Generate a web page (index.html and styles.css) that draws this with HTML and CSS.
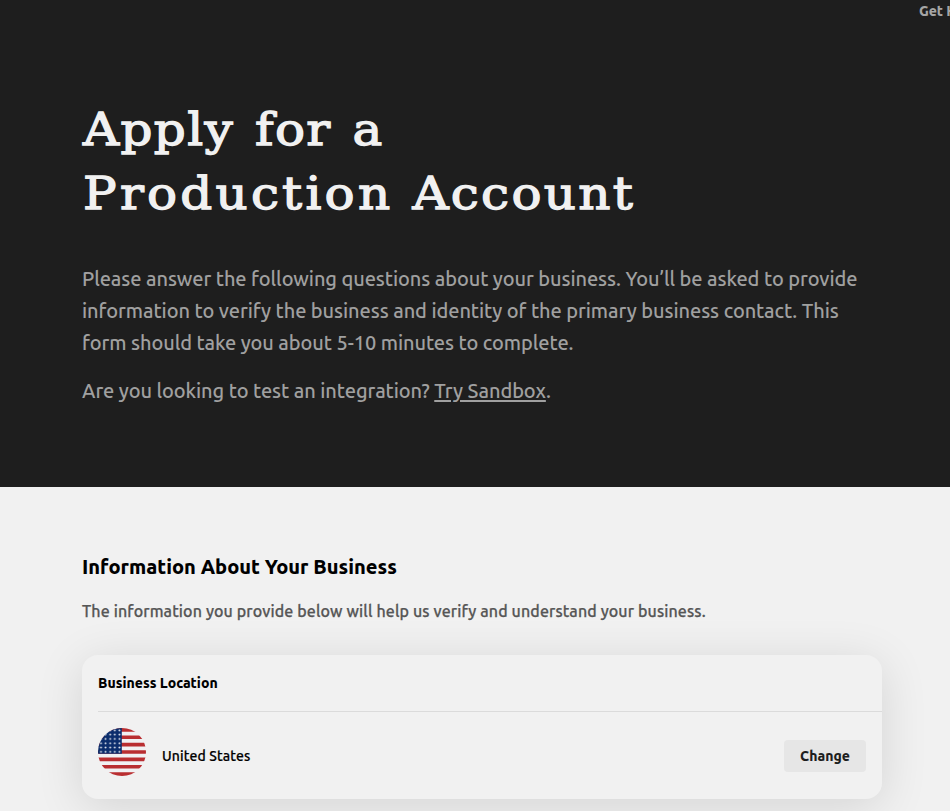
FILE: index.html
```html
<!DOCTYPE html>
<html lang="en">
<head>
<meta charset="utf-8">
<title>Apply for a Production Account</title>
<link rel="stylesheet" href="styles.css">
</head>
<body>
<header class="hero">
  <nav class="topnav"><a class="help" href="#">Get Help</a></nav>
  <div class="container">
    <h1><span class="first-line">Apply for a</span><br><span class="wide">Production </span>Account</h1>
    <p class="lead">Please answer the following questions about your business. You’ll be asked to provide<br>information to verify the business and identity of the primary business contact. This<br>form should take you about 5-10 minutes to complete.</p>
    <p class="lead">Are you looking to test an integration? <a href="#">Try Sandbox</a>.</p>
  </div>
</header>
<main class="container">
  <h2>Information About Your Business</h2>
  <p class="sub">The information you provide below will help us verify and understand your business.</p>
  <section class="card">
    <h3>Business Location</h3>
    <div class="row">
      <svg class="flag" viewBox="0 0 48 48" aria-hidden="true">
        <defs>
          <clipPath id="round"><circle cx="24" cy="24" r="24"/></clipPath>
          <pattern id="stars" x="0.7" y="0.2" width="4.6" height="4.3" patternUnits="userSpaceOnUse"><circle cx="2.3" cy="2.15" r="0.95" fill="#f1f3f8"/></pattern>
        </defs>
        <g clip-path="url(#round)">
          <path fill="#f1f1f3" d="M0 0h48v48H0z"/>
          <path stroke="#b92e31" stroke-width="3.69" d="M0 1.85h48M0 9.23h48M0 16.62h48M0 24h48M0 31.38h48M0 38.77h48M0 46.15h48"/>
          <path fill="#0b2d6c" d="M0 0h23.8v25.85H0z"/>
          <path fill="url(#stars)" d="M0 0h23.8v25.85H0z"/>
        </g>
      </svg>
      <span class="country">United States</span>
      <button class="change" type="button">Change</button>
    </div>
  </section>
</main>
</body>
</html>
```
FILE: styles.css
```css
* { box-sizing: border-box; }
html { overflow: hidden; }
body { margin: 0; height: 811px; overflow: hidden; background: #f1f1f1; font-family: Ubuntu, "Noto Sans", sans-serif; color: #000; }
h1, h2, h3, p { margin: 0; }
.container { width: 800px; margin-left: 82px; }
.hero { height: 487px; background: #1e1e1e; overflow: hidden; }
.topnav { height: 97px; padding-left: 919px; white-space: nowrap; }
.help { display: block; color: #a5a5a5; font-size: 14px; line-height: 22px; font-weight: 800; letter-spacing: -.1px; text-decoration: none; }
h1 { font: 400 45px/64px "DejaVu Serif", serif; letter-spacing: 2.1px; color: #f1f1f1; -webkit-text-stroke: 1.3px #f1f1f1; white-space: nowrap; padding: 1px 0 0 1px; margin-bottom: 37px; transform: scaleX(1.11); transform-origin: 0 0; }
.first-line { letter-spacing: 1.2px; word-spacing: 3.5px; }
.wide { letter-spacing: 2.9px; }
.lead { font-size: 20px; line-height: 32px; font-weight: 500; letter-spacing: -.08px; color: #a0a0a0; white-space: nowrap; margin-bottom: 16px; }
.lead a { color: inherit; text-underline-offset: 2px; text-decoration-thickness: 2px; }
h2 { font-size: 20px; line-height: 32px; font-weight: 800; padding-top: 64px; white-space: nowrap; }
.sub { font-size: 16px; line-height: 24px; font-weight: 500; letter-spacing: .125px; -webkit-text-stroke: .25px; color: #565656; margin-top: 16px; white-space: nowrap; }
.card { margin-top: 32px; height: 144px; padding-left: 16px; border-radius: 16px; background: #f1f1f1; box-shadow: 0 8px 48px rgba(0,0,0,.12); overflow: hidden; }
h3 { height: 57px; border-bottom: 1px solid #dbdbdb; font-size: 14px; line-height: 56px; font-weight: 800; }
.row { display: flex; align-items: flex-start; padding: 16px 16px 0 0; }
.flag { width: 48px; height: 48px; }
.country { margin: 16px 0 0 16px; font-size: 14px; line-height: 24px; font-weight: 500; letter-spacing: .12px; -webkit-text-stroke: .2px; }
.change { margin: 12px 0 0 auto; width: 82px; height: 32px; padding: 0; border: 0; border-radius: 4px; background: #e6e6e6; color: #1e1e1e; font: 800 14px/32px Ubuntu, "Noto Sans", sans-serif; }
```
